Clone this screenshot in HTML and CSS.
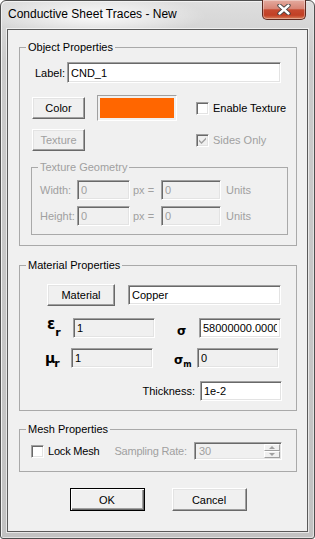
FILE: index.html
```html
<!DOCTYPE html>
<html lang="en">
<head>
    <meta charset="UTF-8">
    <meta name="viewport" content="width=device-width, initial-scale=1.0">
    <title>Conductive Sheet Traces - New</title>
    <link rel="stylesheet" href="styles.css">
</head>
<body>
<div class="window">
    <div class="titlebar">
        <span class="title">Conductive Sheet Traces - New</span>
        <button class="close" aria-label="Close">
            <svg width="14" height="11" viewBox="0 0 14 11">
                <path d="M2.5 1.5 L11.5 9.5 M11.5 1.5 L2.5 9.5" stroke="#3d3d3d" stroke-width="4.2" stroke-linecap="round"/>
                <path d="M2.5 1.5 L11.5 9.5 M11.5 1.5 L2.5 9.5" stroke="#fff" stroke-width="2.4" stroke-linecap="round"/>
            </svg>
        </button>
    </div>

    <div class="client">
        <fieldset class="group">
            <legend>Object Properties</legend>
            <div class="row label-row">
                <label class="field-label" for="label">Label:</label>
                <input id="label" class="text label-input" value="CND_1">
            </div>
            <div class="row color-row">
                <button class="btn small">Color</button>
                <span class="swatch"><span class="swatch-fill"></span></span>
                <label class="check enable"><span class="box"></span>Enable Texture</label>
            </div>
            <div class="row texture-row">
                <button class="btn small" disabled>Texture</button>
                <label class="check sides disabled">
                    <span class="box checked">
                        <svg width="9" height="9" viewBox="0 0 9 9"><path d="M1 3.5 L3.5 6 L8 1.5 L8 3.5 L3.5 8 L1 5.5 Z" fill="#a0a0a0"/></svg>
                    </span>Sides Only
                </label>
            </div>
            <fieldset class="group geometry disabled">
                <legend>Texture Geometry</legend>
                <div class="geo">
                    <span>Width:</span>
                    <input class="text" value="0" disabled>
                    <span class="px">px =</span>
                    <input class="text" value="0" disabled>
                    <span class="units">Units</span>
                    <span>Height:</span>
                    <input class="text" value="0" disabled>
                    <span class="px">px =</span>
                    <input class="text" value="0" disabled>
                    <span class="units">Units</span>
                </div>
            </fieldset>
        </fieldset>

        <fieldset class="group material">
            <legend>Material Properties</legend>
            <div class="row mat-row">
                <button class="btn material-btn">Material</button>
                <input class="text copper" value="Copper">
            </div>
            <div class="row sym-row first">
                <span class="sym eps">&#949;<sub>r</sub></span>
                <input class="text ro" value="1" readonly>
                <span class="sym sigma">&#963;</span>
                <input class="text" value="58000000.0000">
            </div>
            <div class="row sym-row second">
                <span class="sym mu">&#956;<sub>r</sub></span>
                <input class="text ro" value="1" readonly>
                <span class="sym sigma-m">&#963;<sub>m</sub></span>
                <input class="text ro" value="0" readonly>
            </div>
            <div class="row thick-row">
                <label for="thick">Thickness:</label>
                <input id="thick" class="text" value="1e-2">
            </div>
        </fieldset>

        <fieldset class="group mesh">
            <legend>Mesh Properties</legend>
            <div class="row mesh-row">
                <label class="check"><span class="box"></span>Lock Mesh</label>
                <span class="muted sampling">Sampling Rate:</span>
                <div class="spin">
                    <input class="spin-value" value="30" disabled>
                    <span class="spin-btns">
                        <span class="spin-up"></span>
                        <span class="spin-down"></span>
                    </span>
                </div>
            </div>
        </fieldset>

        <div class="actions">
            <button class="btn dialog default">OK</button>
            <button class="btn dialog">Cancel</button>
        </div>
    </div>
</div>
</body>
</html>
```

FILE: styles.css
```css
* {
    box-sizing: border-box;
}

body {
    margin: 0;
    font: 11px "Liberation Sans", Arial, sans-serif;
    color: #000;
}

.window {
    width: 315px;
    height: 539px;
    display: flex;
    flex-direction: column;
    padding: 0 6px 6px;
    border: 1px solid #4f4f4f;
    border-radius: 6px 6px 3px 3px;
    background:
        radial-gradient(ellipse 110px 20px at 95px 15px, rgba(255, 255, 255, 0.9), rgba(255, 255, 255, 0)),
        linear-gradient(#dedede, #cbcbcb 60px, #c2c2c2);
    box-shadow: inset 1px 1px 0 #f2f2f2, inset -1px -1px 0 #e2e2e2;
}

/* title bar */
.titlebar {
    height: 28px;
    display: flex;
    align-items: flex-start;
}

.title {
    flex: 1;
    padding: 6px 0 0 1px;
    font-size: 12px;
    line-height: 14px;
}

.close {
    width: 44px;
    height: 20px;
    margin: -1px 2px 0 0;
    padding: 0;
    display: flex;
    align-items: center;
    justify-content: center;
    border: 1px solid #5e2a20;
    border-top: none;
    border-radius: 0 0 5px 5px;
    background: linear-gradient(#e4ab9f, #d88576 45%, #c64a30 52%, #c24025 80%, #d8805c);
    box-shadow: inset 0 0 0 1px rgba(255, 255, 255, 0.35);
}

/* client area */
.client {
    flex: 1;
    padding: 11px 10px 0 11px;
    background: #f0f0f0;
    border: 1px solid #5a5a5a;
    box-shadow: 0 0 0 1px rgba(255, 255, 255, 0.6);
}

.group {
    margin: 0;
    padding: 0;
    min-inline-size: 0;
    border: 1px solid #a9a9a9;
}

.group legend {
    margin-left: 6px;
    padding: 0 2px;
    line-height: 13px;
}

.row {
    display: flex;
    align-items: center;
    white-space: nowrap;
}

.row > * {
    flex-shrink: 0;
}

.muted,
.disabled,
.disabled legend {
    color: #a0a0a0;
}

/* controls */
.text {
    height: 20px;
    padding: 0 3px;
    font: inherit;
    color: #000;
    background: #fff;
    border: 1px solid;
    border-color: #a0a0a0 #fff #fff #a0a0a0;
    box-shadow: inset 1px 1px 0 #696969, inset -1px -1px 0 #e3e3e3;
    outline: none;
}

.text.ro,
.text:disabled {
    background: #f0f0f0;
}

.text:disabled {
    color: #a0a0a0;
}

.btn {
    height: 22px;
    padding: 0;
    font: inherit;
    color: #000;
    background: #f0f0f0;
    border: 1px solid;
    border-color: #fff #696969 #696969 #fff;
    box-shadow: inset -1px -1px 0 #a0a0a0, inset 1px 1px 0 #e3e3e3;
}

.btn:disabled {
    color: #a0a0a0;
}

.btn.default {
    border-color: #000;
    box-shadow: inset 1px 1px 0 #fff, inset -1px -1px 0 #696969, inset -2px -2px 0 #a0a0a0;
}

.check {
    display: flex;
    align-items: center;
    gap: 4px;
}

.box {
    width: 13px;
    height: 13px;
    display: flex;
    align-items: center;
    justify-content: center;
    background: #fff;
    border: 1px solid;
    border-color: #a0a0a0 #fff #fff #a0a0a0;
    box-shadow: inset 1px 1px 0 #696969, inset -1px -1px 0 #e3e3e3;
}

.box.checked {
    background: #f0f0f0;
}

/* object properties */
.label-row {
    margin-top: 8px;
    padding-left: 15px;
}

.field-label {
    width: 32px;
}

.label-input {
    width: 214px;
    height: 21px;
}

.color-row {
    margin-top: 12px;
    padding-left: 12px;
}

.small {
    width: 53px;
}

.swatch {
    width: 80px;
    height: 26px;
    margin-left: 12px;
    padding: 2px;
    border: 1px solid;
    border-color: #a0a0a0 #fff #fff #a0a0a0;
}

.swatch-fill {
    display: block;
    height: 100%;
    background: #ff6600;
}

.enable {
    margin-left: 19px;
}

.texture-row {
    margin-top: 8px;
    padding-left: 12px;
}

.sides {
    margin-left: 111px;
}

.geometry {
    margin: 10px 8px 10px 11px;
}

.geo {
    display: grid;
    grid-template-columns: 37px 53px 31px 60px auto;
    grid-auto-rows: 20px;
    row-gap: 6px;
    align-items: center;
    padding: 6px 0 8px 8px;
}

.geo .px {
    padding-left: 3px;
}

.geo .units {
    padding-left: 5px;
}

/* material properties */
.material {
    margin-top: 13px;
    padding-bottom: 9px;
}

.mat-row {
    margin-top: 12px;
    padding-left: 27px;
}

.material-btn {
    width: 68px;
}

.copper {
    width: 153px;
    margin-left: 13px;
}

.sym-row {
    padding-left: 27px;
    height: 20px;
}

.sym-row.first {
    margin-top: 12px;
}

.sym-row.second {
    margin-top: 10px;
}

.sym-row .text {
    width: 82px;
}

.sym {
    font-family: "DejaVu Sans", sans-serif;
    font-weight: bold;
    line-height: 20px;
}

.sym sub {
    font-size: 11px;
    vertical-align: -4px;
    line-height: 0;
}

.eps {
    width: 26px;
    font-size: 15px;
    margin-top: -8px;
}

.eps sub {
    vertical-align: -7px;
}

.mu {
    width: 26px;
    margin-left: -2px;
    padding-right: 2px;
    font-size: 14px;
}

.mu sub {
    margin-left: -1px;
}

.sigma,
.sigma-m {
    width: 44px;
    padding-left: 22px;
    font-size: 12px;
}

.sigma {
    margin-top: 6px;
}

.sigma-m {
    padding-left: 21px;
    margin-top: 3px;
}

.sigma-m sub {
    font-size: 8px;
    vertical-align: -3px;
}

.thick-row {
    margin-top: 13px;
    justify-content: flex-end;
    padding-right: 14px;
}

.thick-row label {
    margin-right: 5px;
}

.thick-row .text {
    width: 82px;
}

/* mesh properties */
.mesh {
    margin-top: 12px;
    padding-bottom: 11px;
}

.mesh-row {
    margin-top: 6px;
    height: 18px;
    padding: 0 14px 0 11px;
    letter-spacing: -0.2px;
}

.sampling {
    margin-left: 15px;
}

.spin {
    width: 88px;
    height: 18px;
    margin-left: auto;
    display: flex;
    background: #f0f0f0;
    border: 1px solid;
    border-color: #a0a0a0 #fff #fff #a0a0a0;
    box-shadow: inset 1px 1px 0 #696969, inset -1px -1px 0 #e3e3e3;
    padding: 1px;
    letter-spacing: 0;
}

.spin-value {
    flex: 1;
    min-width: 0;
    padding: 0 3px;
    font: inherit;
    color: #a0a0a0;
    background: transparent;
    border: none;
}

.spin-btns {
    width: 16px;
    display: flex;
    flex-direction: column;
}

.spin-up,
.spin-down {
    flex: 1;
    display: flex;
    align-items: center;
    justify-content: center;
    background: #f0f0f0;
    border: 1px solid;
    border-color: #fff #a0a0a0 #a0a0a0 #fff;
}

.spin-up::after,
.spin-down::after {
    content: "";
    border: 3px solid transparent;
}

.spin-up::after {
    border-bottom-color: #a0a0a0;
    border-top-width: 0;
}

.spin-down::after {
    border-top-color: #a0a0a0;
    border-bottom-width: 0;
}

/* dialog buttons */
.actions {
    display: flex;
    justify-content: center;
    gap: 27px;
    margin-top: 16px;
}

.dialog {
    width: 75px;
    height: 23px;
}
```
